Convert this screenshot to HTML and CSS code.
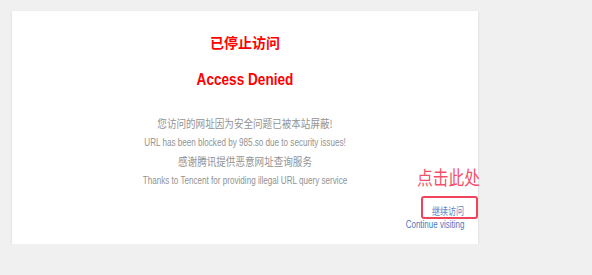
FILE: index.html
```html
<!DOCTYPE html>
<html lang="zh-CN">
<head>
  <meta charset="UTF-8" />
  <meta name="viewport" content="width=device-width, initial-scale=1.0"/>
  <title>已停止访问</title>
  <link rel="stylesheet" href="styles.css">
</head>
<body>

<div class="card">
  <h1 class="title-cn">已停止访问</h1>
  <h2 class="title-en">Access Denied</h2>

  <p class="msg-cn">您访问的网址因为安全问题已被本站屏蔽!</p>
  <p class="msg-en">URL has been blocked by 985.so due to security issues!</p>
  <p class="msg-cn">感谢腾讯提供恶意网址查询服务</p>
  <p class="msg-en">Thanks to Tencent for providing illegal URL query service</p>

  <div class="actions">
    <a href="#" class="go-cn">继续访问</a>
    <a href="#" class="go-en">Continue visiting</a>
  </div>

  <!-- annotation -->
  <div class="note">点击此处</div>
  <div class="note-box"></div>
</div>

</body>
</html>
```

FILE: styles.css
```css
* {
  margin: 0;
  padding: 0;
  box-sizing: border-box;
}

body {
  background-color: #f0f0f0;
  font-family: "Liberation Sans", "Noto Sans CJK SC", sans-serif;
}

.card {
  position: relative;
  width: 466px;
  height: 233px;
  margin: 11px 0 0 12px;
  padding-top: 21px;
  background: #fff;
  box-shadow: 0 1px 2px rgba(0, 0, 0, 0.12);
  text-align: center;
}

/* the page text is drawn narrow */
.title-en, .msg-cn, .msg-en {
  transform: scaleX(0.8);
}

.title-cn {
  font-family: "Noto Sans CJK SC", sans-serif;
  font-size: 14px;
  line-height: 20px;
  font-weight: bold;
  color: #ff0000;
}

.title-en {
  margin-top: 18px;
  font-size: 17px;
  line-height: 20px;
  font-weight: bold;
  color: #ff0000;
}

.msg-cn, .msg-en {
  line-height: 19px;
  color: #929292;
}

.msg-cn {
  font-family: "Noto Sans CJK SC", sans-serif;
  font-size: 11px;
  transform: scaleX(0.87);
}

.title-en + .msg-cn {
  margin-top: 24px;
}

.msg-en {
  font-size: 10px;
  transform: scaleX(0.81);
}

.actions {
  display: flex;
  flex-direction: column;
  align-items: flex-end;
  margin-top: 14px;
  padding-right: 14px;
}

.actions a {
  text-decoration: none;
  color: #4a7ac2;
  line-height: 14px;
  transform: scaleX(0.8);
  transform-origin: right center;
}

.go-cn {
  font-family: "Noto Sans CJK SC", sans-serif;
  font-size: 10px;
  color: #5d87c4 !important;
}

.go-en {
  font-size: 10px;
}

.note {
  position: absolute;
  left: 405px;
  top: 154px;
  font-family: "Noto Sans CJK SC", sans-serif;
  font-size: 19px;
  line-height: 24px;
  color: #f2506a;
  white-space: nowrap;
  transform: scaleX(0.83);
  transform-origin: left center;
}

.note-box {
  position: absolute;
  left: 409px;
  top: 185px;
  width: 57px;
  height: 23px;
  border: 2px solid #f0445c;
  border-radius: 3px;
}
```
